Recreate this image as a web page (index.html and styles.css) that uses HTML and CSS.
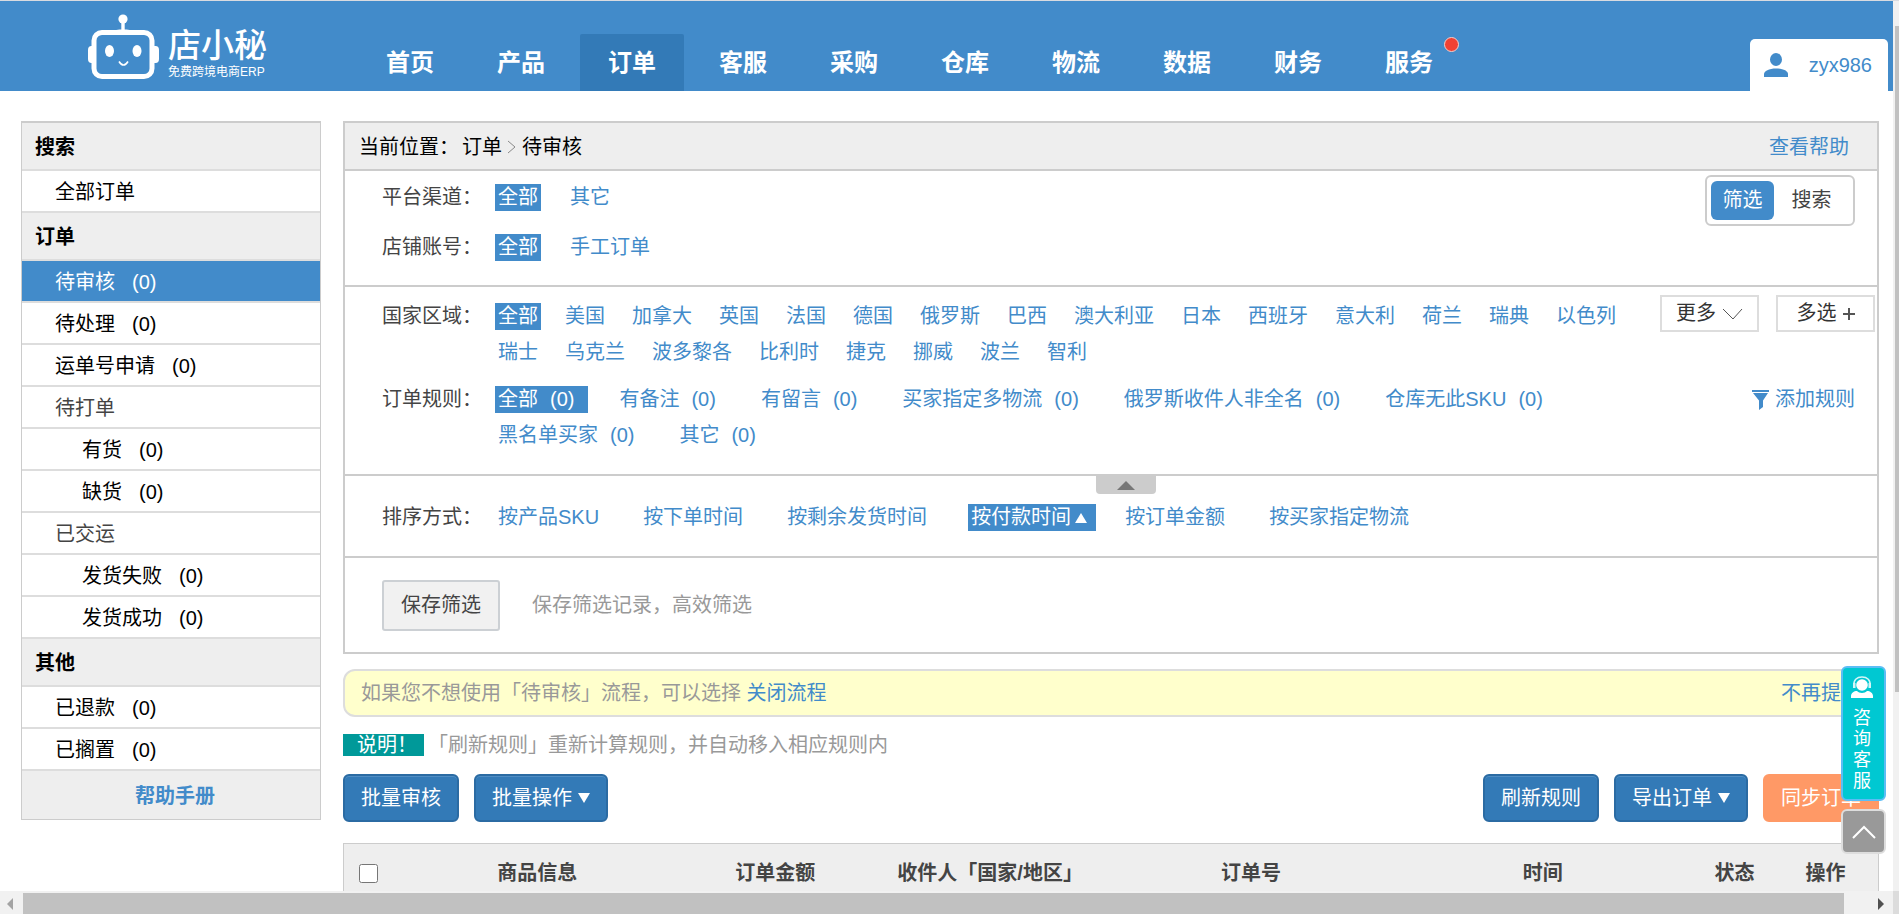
FILE: index.html
```html
<!DOCTYPE html>
<html lang="zh-CN">
<head>
<meta charset="utf-8">
<title>店小秘 - 待审核</title>
<link rel="stylesheet" href="styles.css">
</head>
<body>
<div class="window">
  <div class="page">
    <header class="topbar">
      <a class="logo" href="#">
        <svg class="logo-robot" viewBox="0 0 71 65" aria-hidden="true">
          <circle cx="35" cy="5" r="4.6" fill="#fff"/>
          <path d="M35 8v10" stroke="#fff" stroke-width="3.4"/>
          <path d="M24 17c3-2 19-2 22 0z" fill="#fff"/>
          <rect x="6" y="18.500" width="58" height="44" rx="8" fill="none" stroke="#fff" stroke-width="5"/>
          <path d="M5 32H3.500Q0 32 0 36v9q0 4 3.500 4H5zM66 32h1.500Q71 32 71 36v9q0 4-3.500 4H66z" fill="#fff"/>
          <ellipse cx="21.500" cy="37" rx="4.500" ry="6" fill="#fff"/>
          <ellipse cx="49" cy="37" rx="4.500" ry="6" fill="#fff"/>
          <path d="M31 47.500q4.500 7 9 0" fill="none" stroke="#fff" stroke-width="1.600"/>
        </svg>
        <span class="logo-words">
          <span class="logo-name">店小秘</span>
          <span class="logo-tag">免费跨境电商ERP</span>
        </span>
      </a>
      <nav class="mainnav">
        <a href="#">首页</a>
        <a href="#">产品</a>
        <a href="#" class="current">订单</a>
        <a href="#">客服</a>
        <a href="#">采购</a>
        <a href="#">仓库</a>
        <a href="#">物流</a>
        <a href="#">数据</a>
        <a href="#">财务</a>
        <a href="#" class="has-dot">服务<span class="dot"></span></a>
      </nav>
      <a class="account" href="#">
        <svg class="account-icon" viewBox="0 0 24 24" aria-hidden="true">
          <ellipse cx="12" cy="6.500" rx="6" ry="6.500" fill="#428bca"/>
          <path d="M0 24v-3c0-3 5-5.500 12-5.500s12 2.500 12 5.500v3z" fill="#428bca"/>
        </svg>
        <span>zyx986</span>
      </a>
    </header>

    <div class="layout">
      <aside class="sidebar">
        <h2>搜索</h2>
        <a href="#">全部订单</a>
        <h2>订单</h2>
        <a href="#" class="current">待审核<span>(0)</span></a>
        <a href="#">待处理<span>(0)</span></a>
        <a href="#">运单号申请<span>(0)</span></a>
        <p>待打单</p>
        <a href="#" class="sub">有货<span>(0)</span></a>
        <a href="#" class="sub">缺货<span>(0)</span></a>
        <p>已交运</p>
        <a href="#" class="sub">发货失败<span>(0)</span></a>
        <a href="#" class="sub">发货成功<span>(0)</span></a>
        <h2>其他</h2>
        <a href="#">已退款<span>(0)</span></a>
        <a href="#">已搁置<span>(0)</span></a>
        <a href="#" class="manual">帮助手册</a>
      </aside>

      <main class="main">
        <div class="panel">
          <div class="crumbs">
            <span class="crumbs-label">当前位置：</span>
            <span>订单</span>
            <svg class="crumbs-sep" viewBox="0 0 9 14" aria-hidden="true"><path d="M1 1l7 6-7 6" fill="none" stroke="#888"/></svg>
            <span>待审核</span>
            <a href="#">查看帮助</a>
          </div>

          <section class="block channel">
            <div class="rows rows-wide">
              <div class="row">
                <span class="label">平台渠道：</span>
                <div class="options"><a href="#" class="on">全部</a><a href="#">其它</a></div>
              </div>
              <div class="row">
                <span class="label">店铺账号：</span>
                <div class="options"><a href="#" class="on">全部</a><a href="#">手工订单</a></div>
              </div>
            </div>
            <div class="toggle">
              <button type="button" class="on">筛选</button>
              <button type="button">搜索</button>
            </div>
          </section>

          <section class="block rules">
            <div class="row">
              <span class="label">国家区域：</span>
              <div class="options">
                <a href="#" class="on">全部</a><a href="#">美国</a><a href="#">加拿大</a><a href="#">英国</a><a href="#">法国</a><a href="#">德国</a><a href="#">俄罗斯</a><a href="#">巴西</a><a href="#">澳大利亚</a><a href="#">日本</a><a href="#">西班牙</a><a href="#">意大利</a><a href="#">荷兰</a><a href="#">瑞典</a><a href="#">以色列</a><a href="#">瑞士</a><a href="#">乌克兰</a><a href="#">波多黎各</a><a href="#">比利时</a><a href="#">捷克</a><a href="#">挪威</a><a href="#">波兰</a><a href="#">智利</a>
              </div>
              <div class="boxes">
                <button type="button">更多<svg class="tick" viewBox="0 0 21 12" aria-hidden="true"><path d="M1 1l10 10L20 1" fill="none" stroke="#555"/></svg></button>
                <button type="button">多选<svg class="plus" viewBox="0 0 12 12" aria-hidden="true"><path d="M6 0v12M0 6h12" fill="none" stroke="#555" stroke-width="2"/></svg></button>
              </div>
            </div>
            <div class="row">
              <span class="label">订单规则：</span>
              <div class="options counted">
                <a href="#" class="on">全部<span>(0)</span></a><a href="#">有备注<span>(0)</span></a><a href="#">有留言<span>(0)</span></a><a href="#">买家指定多物流<span>(0)</span></a><a href="#">俄罗斯收件人非全名<span>(0)</span></a><a href="#">仓库无此SKU<span>(0)</span></a><a href="#">黑名单买家<span>(0)</span></a><a href="#">其它<span>(0)</span></a>
              </div>
              <a class="add-rule" href="#">
                <svg viewBox="0 0 17 20" aria-hidden="true"><path d="M0 0h17v2H0zM1 3h15l-5 7.500V17l-4 3v-9.500z" fill="#428bca"/></svg>
                添加规则
              </a>
            </div>
          </section>

          <section class="block sorting">
            <button type="button" class="fold" aria-label="收起"><svg viewBox="0 0 18 9" aria-hidden="true"><path d="M9 0l9 9H0z" fill="#777"/></svg></button>
            <div class="row">
              <span class="label">排序方式：</span>
              <div class="options sorts">
                <a href="#">按产品SKU</a><a href="#">按下单时间</a><a href="#">按剩余发货时间</a><a href="#" class="on">按付款时间<svg viewBox="0 0 12 10" aria-hidden="true"><path d="M6 0l6 10H0z" fill="#fff"/></svg></a><a href="#">按订单金额</a><a href="#">按买家指定物流</a>
              </div>
            </div>
          </section>

          <section class="block saving">
            <button type="button">保存筛选</button>
            <span>保存筛选记录，高效筛选</span>
          </section>
        </div>

        <div class="notice">
          <span>如果您不想使用「待审核」流程，可以选择 <a href="#">关闭流程</a></span>
          <a href="#">不再提示</a>
        </div>

        <p class="explain"><strong>说明！</strong><span>「刷新规则」重新计算规则，并自动移入相应规则内</span></p>

        <div class="actions">
          <button type="button">批量审核</button>
          <button type="button">批量操作<svg viewBox="0 0 12 10" aria-hidden="true"><path d="M0 0h12L6 10z" fill="#fff"/></svg></button>
          <button type="button" class="first-right">刷新规则</button>
          <button type="button">导出订单<svg viewBox="0 0 12 10" aria-hidden="true"><path d="M0 0h12L6 10z" fill="#fff"/></svg></button>
          <button type="button" class="sync">同步订单</button>
        </div>

        <table class="orders">
          <thead>
            <tr>
              <th class="c-check"><input type="checkbox" aria-label="全选"></th>
              <th class="c-goods">商品信息</th>
              <th class="c-amount">订单金额</th>
              <th class="c-buyer">收件人「国家/地区」</th>
              <th class="c-number">订单号</th>
              <th class="c-time">时间</th>
              <th class="c-state">状态</th>
              <th class="c-action">操作</th>
            </tr>
          </thead>
        </table>
      </main>
    </div>
  </div>

  <div class="floaters">
    <button type="button" class="service">
      <svg viewBox="0 0 22 22" aria-hidden="true">
        <circle cx="11" cy="9" r="5.800" fill="#fff"/>
        <path d="M3 10C2 4 6 1 11 1s9 3 8 9" fill="none" stroke="#d5f5f7" stroke-width="1.500"/>
        <path d="M2 7h2.500v5H2zM17.500 7H20v5h-2.500z" fill="#d5f5f7"/>
        <path d="M0 22v-2c0-3 3-5 6-5 2 2.500 8 2.500 10 0 3 0 6 2 6 5v2z" fill="#fff"/>
      </svg>
      <span>咨</span><span>询</span><span>客</span><span>服</span>
    </button>
    <button type="button" class="to-top" aria-label="返回顶部">
      <svg viewBox="0 0 24 14" aria-hidden="true"><path d="M1 13L12 2l11 11" fill="none" stroke="#fff" stroke-width="2"/></svg>
    </button>
  </div>

  <div class="vbar"><div class="vthumb"></div></div>
  <div class="hbar">
    <svg viewBox="0 0 6 12" aria-hidden="true"><path d="M6 0v12L0 6z" fill="#a3a3a3"/></svg>
    <div class="hthumb"></div>
    <svg viewBox="0 0 6 12" aria-hidden="true"><path d="M0 0v12l6-6z" fill="#505050"/></svg>
  </div>
  <div class="corner"></div>
</div>
</body>
</html>
```
FILE: styles.css
```css
:root {
  --blue: #428bca;
  --line: #ccc;
  --soft-line: #ddd;
  --bar: #eee;
  --text: #444;
}

* {
  box-sizing: border-box;
}

body {
  margin: 0;
  overflow: hidden;
  background: #fff;
  color: var(--text);
  font-family: "Liberation Sans", "Noto Sans CJK SC", sans-serif;
  font-size: 20px;
  line-height: 27px;
}

a {
  color: var(--blue);
  text-decoration: none;
}

button {
  padding: 0;
  font: inherit;
  color: inherit;
  cursor: pointer;
}

svg {
  display: block;
  flex: none;
}

.window {
  position: relative;
  display: grid;
  grid-template: minmax(0, 1fr) 23px / minmax(0, 1fr) 6px;
  height: 100vh;
  border-top: 1px solid #d9dbe0;
}

.page {
  overflow: hidden;
}

/* Top bar */
.topbar {
  display: flex;
  align-items: flex-end;
  height: 90px;
  padding: 0 5px 0 88px;
  background: var(--blue);
}

.logo {
  display: flex;
  align-items: flex-end;
  gap: 9px;
  width: 270px;
  padding-bottom: 12px;
  color: #fff;
}

.logo-robot {
  width: 71px;
  height: 65px;
}

.logo-words {
  display: grid;
}

.logo-name {
  font-size: 33px;
  font-weight: 500;
  line-height: 38px;
}

.logo-tag {
  font-size: 12px;
  line-height: 14px;
}

.mainnav {
  display: flex;
  gap: 7px;
}

.mainnav a {
  padding: 0 28px;
  border-radius: 2px 2px 0 0;
  color: #fff;
  font-size: 24px;
  font-weight: 700;
  line-height: 57px;
}

.mainnav .current {
  background: #337ab7;
}

.mainnav .has-dot {
  position: relative;
}

.dot {
  position: absolute;
  top: 3px;
  right: 2px;
  width: 15px;
  height: 15px;
  border: 1px solid #f4d0cc;
  border-radius: 50%;
  background: #f04134;
}

.account {
  display: flex;
  align-items: center;
  gap: 21px;
  height: 52px;
  margin-left: auto;
  padding: 0 16px 0 14px;
  border-radius: 5px 5px 0 0;
  background: #fff;
}

.account-icon {
  width: 24px;
  height: 24px;
}

/* Columns */
.layout {
  display: flex;
  align-items: flex-start;
  gap: 22px;
  padding: 30px 14px 0 21px;
}

.sidebar {
  flex: none;
  width: 300px;
  border: 1px solid var(--line);
  border-top-width: 2px;
}

.sidebar h2,
.sidebar p,
.sidebar a {
  display: flex;
  gap: 17px;
  margin: 0;
  border-bottom: 2px solid var(--soft-line);
}

.sidebar h2 {
  padding: 2px 0 0 13px;
  background: var(--bar);
  color: #000;
  font-size: 20px;
  line-height: 44px;
}

.sidebar p,
.sidebar a {
  padding: 2px 0 0 33px;
  line-height: 38px;
}

.sidebar a {
  color: #000;
}

.sidebar .sub {
  padding-left: 60px;
}

.sidebar .current {
  background: var(--blue);
  color: #fff;
}

.sidebar .manual {
  justify-content: center;
  padding-left: 8px;
  border-bottom: 0;
  background: var(--bar);
  color: var(--blue);
  font-weight: 700;
  line-height: 46px;
}

.main {
  flex: 1;
  min-width: 0;
}

/* Filter panel */
.panel {
  border: 2px solid var(--line);
}

.crumbs {
  display: flex;
  align-items: center;
  padding: 2px 28px 0 14px;
  background: var(--bar);
  color: #000;
  line-height: 44px;
}

.crumbs-label {
  margin-right: 3px;
}

.crumbs-sep {
  width: 9px;
  height: 14px;
  margin: 0 6px 0 5px;
}

.crumbs a {
  margin-left: auto;
}

.block {
  position: relative;
  padding-left: 37px;
  border-top: 2px solid var(--line);
}

.row {
  display: flex;
}

.label {
  flex: none;
  width: 113px;
}

.options {
  display: flex;
  flex: 1;
  flex-wrap: wrap;
  gap: 9px 21px;
}

.options a {
  display: flex;
  align-items: center;
  padding: 0 3px;
}

.options .on {
  background: var(--blue);
  color: #fff;
}

.rows {
  display: grid;
  flex: 1;
  gap: 23px;
}

.rows-wide .options {
  column-gap: 26px;
}

.channel {
  display: flex;
  align-items: flex-start;
  padding-right: 22px;
}

.channel .rows {
  padding: 13px 0 24px;
}

.toggle {
  display: flex;
  gap: 6px;
  width: 150px;
  margin-top: 4px;
  padding: 4px;
  border: 2px solid var(--line);
  border-radius: 6px;
}

.toggle button {
  width: 63px;
  border: 0;
  border-radius: 6px;
  background: none;
  line-height: 39px;
}

.toggle .on {
  background: var(--blue);
  color: #fff;
}

.rules {
  display: grid;
  gap: 20px;
  padding-top: 16px;
  padding-bottom: 25px;
}

.boxes {
  display: flex;
  align-items: flex-start;
  gap: 17px;
  margin: -8px 2px 0 20px;
}

.boxes button {
  display: flex;
  align-items: center;
  justify-content: center;
  gap: 6px;
  width: 99px;
  border: 2px solid var(--soft-line);
  background: #fff;
  color: #333;
  line-height: 33px;
}

.tick {
  width: 21px;
  height: 12px;
}

.plus {
  width: 12px;
  height: 12px;
}

.counted {
  column-gap: 28px;
}

.counted a {
  gap: 12px;
  padding-right: 14px;
}

.add-rule {
  display: flex;
  align-items: center;
  align-self: flex-start;
  gap: 6px;
  margin: 0 22px 0 40px;
}

.add-rule svg {
  width: 17px;
  height: 20px;
}

.sorting {
  padding-top: 28px;
  padding-bottom: 25px;
}

.sorts {
  column-gap: 26px;
}

.sorts a {
  gap: 4px;
  padding-right: 15px;
}

.sorts .on {
  padding-right: 9px;
}

.sorts svg,
.actions svg {
  width: 12px;
  height: 10px;
}

.fold {
  position: absolute;
  top: 0;
  left: 51%;
  display: flex;
  align-items: center;
  justify-content: center;
  width: 60px;
  height: 18px;
  border: 0;
  border-radius: 0 0 4px 4px;
  background: var(--line);
  transform: translateX(-50%);
}

.fold svg {
  width: 18px;
  height: 9px;
}

.saving {
  display: flex;
  align-items: center;
  gap: 32px;
  padding-top: 22px;
  padding-bottom: 21px;
  color: #999;
}

.saving button {
  padding: 0 17px;
  border: 2px solid #ccd0d4;
  border-radius: 3px;
  background: #f1f1f1;
  color: var(--text);
  line-height: 47px;
}

/* Messages */
.notice {
  display: flex;
  justify-content: space-between;
  margin-top: 15px;
  padding: 0 16px;
  border: 2px solid var(--soft-line);
  border-radius: 12px;
  background: #ffc;
  color: #999;
  line-height: 44px;
}

.explain {
  display: flex;
  gap: 4px;
  margin: 17px 0 18px;
  color: #999;
  line-height: 22px;
}

.explain strong {
  width: 81px;
  padding-left: 14px;
  background: #099;
  color: #fff;
  font-weight: 400;
}

.actions {
  display: flex;
  gap: 15px;
}

.actions button {
  display: flex;
  align-items: center;
  gap: 6px;
  padding: 0 16px;
  border: 2px solid #2b6ba3;
  border-radius: 6px;
  background: #337ab7;
  box-shadow: inset 0 1px 0 #4f8dc4;
  color: #fff;
  line-height: 44px;
  white-space: nowrap;
}

.actions .first-right {
  margin-left: auto;
}

.actions .sync {
  border-color: #f96;
  background: #f96;
  box-shadow: none;
}

/* Order table */
.orders {
  width: 100%;
  height: 61px;
  margin-top: 21px;
  border: 1px solid var(--line);
  border-collapse: collapse;
  table-layout: fixed;
  background: var(--bar);
}

.orders th {
  padding: 0;
  white-space: nowrap;
}

.orders input {
  display: block;
  width: 19px;
  height: 19px;
  margin: 0 0 0 15px;
}

.c-check { width: 48px; }
.c-goods { width: 19%; }
.c-amount { width: 12%; }
.c-buyer { width: 16%; }
.c-number { width: 18%; }
.c-time { width: 20%; }
.c-state { width: 5%; }
.c-action { width: auto; }

/* Floating buttons */
.floaters {
  position: absolute;
  right: 13px;
  bottom: 60px;
  display: grid;
  gap: 8px;
  width: 45px;
}

.service,
.to-top {
  display: flex;
  flex-direction: column;
  align-items: center;
  border: 2px solid #5cbdf5;
  border-radius: 6px;
  color: #fff;
}

.service {
  padding: 8px 3px 7px 0;
  background: #00c8d2;
  font-size: 18px;
  line-height: 21px;
}

.service svg {
  width: 22px;
  height: 22px;
  margin-bottom: 10px;
}

.to-top {
  justify-content: center;
  height: 45px;
  border-color: var(--soft-line);
  background: #999;
}

.to-top svg {
  width: 24px;
  height: 14px;
}

/* Scroll bars */
.vbar {
  padding: 25px 0 0 2px;
  background: #f1f1f1;
}

.vthumb {
  height: 77%;
  background: #c1c1c1;
}

.hbar {
  display: flex;
  align-items: center;
  padding: 2px 9px 0 7px;
  background: #f1f1f1;
}

.hbar svg {
  width: 6px;
  height: 12px;
}

.hthumb {
  flex: 1;
  align-self: stretch;
  margin: 0 34px 0 10px;
  background: #c1c1c1;
}

.corner {
  background: #dcdcdc;
}
```
